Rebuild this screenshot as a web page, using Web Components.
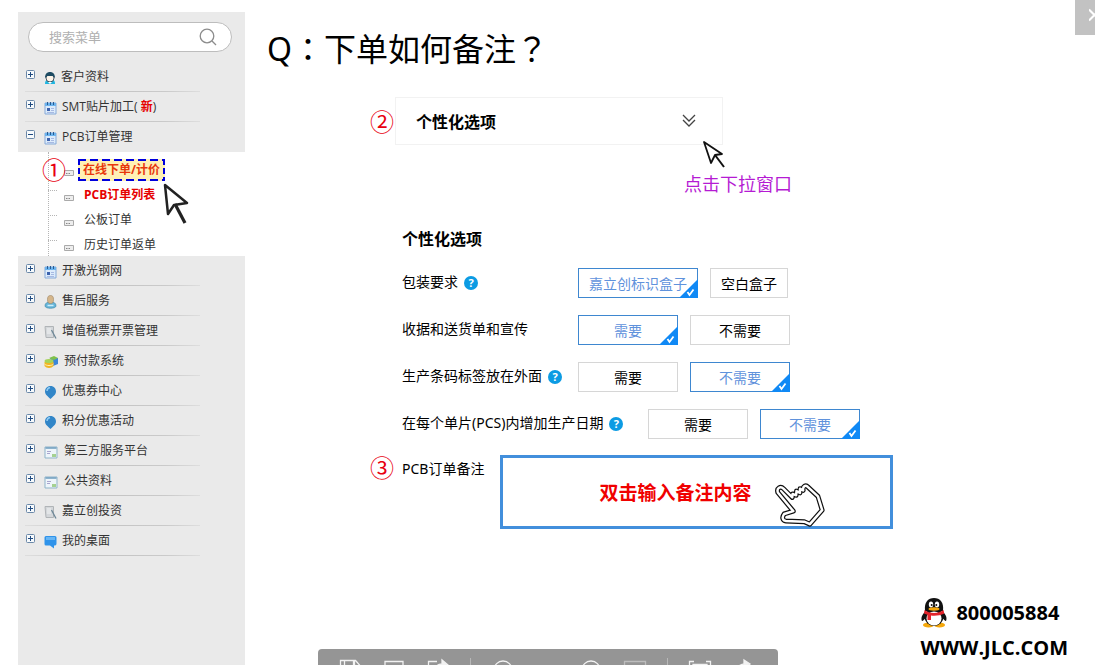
<!DOCTYPE html>
<html lang="zh-CN">
<head>
<meta charset="utf-8">
<meta name="viewport" content="width=device-width, initial-scale=1">
<title>下单如何备注</title>
<style>
  body { margin: 0; background: #fff; color: #000; font: 14px/20px "Open Sans", "Noto Sans CJK SC", sans-serif; overflow: hidden; }
</style>
</head>
<body>
<help-page>
  <side-menu slot="side">
    <menu-item icon="user">客户资料</menu-item>
    <menu-item icon="book">SMT贴片加工( <b style="color:#e60000">新</b>)</menu-item>
    <menu-item icon="book" open>PCB订单管理</menu-item>
    <sub-menu>
      <sub-item mark>在线下单/计价</sub-item>
      <sub-item hot>PCB订单列表</sub-item>
      <sub-item>公板订单</sub-item>
      <sub-item>历史订单返单</sub-item>
    </sub-menu>
    <menu-item icon="book">开激光钢网</menu-item>
    <menu-item icon="agent">售后服务</menu-item>
    <menu-item icon="paper">增值税票开票管理</menu-item>
    <menu-item icon="coins">预付款系统</menu-item>
    <menu-item icon="balloon">优惠券中心</menu-item>
    <menu-item icon="balloon">积分优惠活动</menu-item>
    <menu-item icon="panel">第三方服务平台</menu-item>
    <menu-item icon="panel">公共资料</menu-item>
    <menu-item icon="paper">嘉立创投资</menu-item>
    <menu-item icon="chat">我的桌面</menu-item>
  </side-menu>
  <drop-panel></drop-panel>
  <option-form>
    <choice-row label="包装要求" help options="嘉立创标识盒子,空白盒子" fit checked="0"></choice-row>
    <choice-row label="收据和送货单和宣传" options="需要,不需要" checked="0"></choice-row>
    <choice-row label="生产条码标签放在外面" help options="需要,不需要" checked="1"></choice-row>
    <choice-row label="在每个单片(PCS)内增加生产日期" help wide options="需要,不需要" checked="1"></choice-row>
  </option-form>
  <remark-field></remark-field>
  <contact-info slot="contact"></contact-info>
</help-page>
<viewer-toolbar></viewer-toolbar>
<viewer-close></viewer-close>

<script>
const define = (name, render) => customElements.define(name, class extends HTMLElement {
  connectedCallback() {
    if (this.shadowRoot) return;
    this.attachShadow({ mode: 'open' }).innerHTML = render(this);
  }
});

const ICONS = {
  user: [12, 14, `<path d="M1 13c0-3 1-4 2-4h6c1 0 2 1 2 4z" fill="#21b5e0"/><circle cx="6" cy="7" r="4" fill="#fdf3e7" stroke="#234" stroke-width=".8"/><path d="M1 7c0-4 2-6 5-6s5 2 5 6L8.500 5h-5z" fill="#1f4c63"/><path d="M4 11h4l-2 2z" fill="#fff"/>`],
  book: [13, 14, `<path d="M1 2h11v11H1z" fill="#dcebfb" stroke="#86a9d8"/><path d="M1 2h11v3H1z" fill="#6cb4ee"/><path d="M3.500 1v3M6.500 1v3M9.500 1v3" stroke="#2b5c92"/><path d="M3 7h3v3H3z" fill="#3c62ad"/><path d="M7 7.500h3M7 9.500h3M3 11.500h7" stroke="#a7b9e2"/>`],
  agent: [13, 14, `<path d="M1 11c0-3 2-4 5.500-4S12 8 12 11c0 3-11 3-11 0z" fill="#65b4d8" stroke="#4b8fae" stroke-width=".7"/><path d="M3.500 4.500c0-3 1-4 3-4s3 1 3 4-1 4-3 4-3-1-3-4z" fill="#d5b68b" stroke="#9b835f" stroke-width=".6"/><path d="M3.500 10.500h6" stroke="#c9eefb" stroke-width="1.500"/>`],
  paper: [13, 14, `<path d="M1 1.500h8.500v11H2z" fill="#d4d7da" stroke="#b0b4b7"/><path d="M3 4h4M3 6h4M3 8h4" stroke="#f2f4f5"/><path d="M7.500 5l4.500 8.500" stroke="#6d8797" stroke-width="1.300"/>`],
  coins: [15, 14, `<path d="M6 3h8v6l-5 2z" fill="#3c86d8"/><path d="M5 3l5-2 4 2-4 2z" fill="#7fc14a"/><path d="M.5 7v4c2 2.500 7 2.500 9 0V7z" fill="#f0b522"/><path d="M.5 9c2 2 7 2 9 0" stroke="#fff0b0" fill="none"/><ellipse cx="5" cy="6" rx="4.500" ry="2" fill="#a5d35a"/>`],
  balloon: [13, 14, `<path d="M6.500 1C3 1 1 3.500 1 6.500S3.500 11 6.500 14C9.500 11 12 9.500 12 6.500S10 1 6.500 1z" fill="#3286c8"/><path d="M3 6c0-2 1-3 3-3.500" stroke="#8fcaf3" stroke-width="1.500" fill="none"/>`],
  panel: [15, 14, `<path d="M1 2h12v11H1z" fill="#eef5fa" stroke="#8fb3c9"/><path d="M1.500 3h11" stroke="#6d9dbe" stroke-width="1.500"/><path d="M3 6.500h4M3 8.500h3" stroke="#a9a5cf"/><path d="M8 9h4v3H8z" fill="#a4d192"/>`],
  chat: [13, 14, `<path d="M2 1h9q1.500 0 1.500 1.500v6Q12.500 10.500 11 10.500h-1v3l-4-3H2Q.5 10.500 .5 9V2.500Q.5 1 2 1z" fill="#2f93ea"/><path d="M2 2h9v3H2z" fill="#67b6f5"/>`]
};
const icon = n => { const [w, h, d] = ICONS[n]; return `<svg class="icon" aria-hidden="true" width="${w}" height="${h}" viewBox="0 0 ${w} ${h}">${d}</svg>`; };

define('help-page', () => `
<style>
  :host { display: grid; grid-template-columns: 227px 1fr; box-sizing: border-box; min-height: 100vh; padding: 12px 0 0 18px; }
  main { display: flex; flex-direction: column; padding-top: 15px; }
  h1 { margin: 0 0 26px; padding-left: 22px; font: 32px/44px "Noto Sans", "Noto Sans CJK SC", sans-serif; }
  .mid { font-family: "Noto Sans CJK TC", sans-serif; line-height: 24px; }
  .body { padding-left: 125px; }
  .contact { margin-top: auto; align-self: flex-end; padding-right: 27px; }
</style>
<slot name="side"></slot>
<main><h1>Q<span class="mid" lang="zh-TW">：</span>下单如何备注<span class="mid" lang="zh-TW">？</span></h1>
<div class="body"><slot></slot></div><div class="contact"><slot name="contact"></slot></div></main>`);

define('step-badge', () => `
<style>:host { display: inline-block; width: 24px; color: #e8000f; font: 24px/24px "Noto Sans CJK SC", sans-serif; }</style><slot></slot>`);

define('side-menu', () => `
<style>
  :host { display: block; background: #eaeaea; }
  .search { display: flex; align-items: center; box-sizing: border-box; height: 30px; margin: 10px 13px 10px 10px; padding: 0 14px 0 20px; border: 1px solid #bdbdbd; border-radius: 15px; background: #fff; }
  input { flex: 1; min-width: 0; border: 0; padding: 0; outline: 0; background: none; font: 13px/20px "Noto Sans CJK SC", sans-serif; color: #333; }
  input::placeholder { color: #b0b0b0; opacity: 1; }
  svg { display: block; }
  button { border: 0; padding: 0; background: none; }
</style>
<form class="search" role="search"><input type="text" aria-label="搜索菜单" placeholder="搜索菜单"><button type="button" aria-label="搜索"><svg width="18" height="18" viewBox="0 0 18 18" fill="none" stroke="#8c8c8c" stroke-width="1.300"><circle cx="8" cy="8" r="6.800"/><path d="M13 13l4 4"/></svg></button></form>
<nav><slot></slot></nav>`);

define('menu-item', el => `
<style>
  :host { display: block; height: 30px; }
  a { display: flex; align-items: center; box-sizing: border-box; height: 30px; width: 175px; margin-left: 7px; padding: 1px 0 0 1px; color: #333; text-decoration: none; font: 12px/20px "Open Sans", "Noto Sans CJK SC", sans-serif; white-space: pre; border-bottom: 1px solid; border-image: linear-gradient(90deg, #dedede, #c2c2c2 40%, #cacaca 80%, #dedede) 1; }
  :host([open]) a { border-color: transparent; border-image: none; }
  .fold { margin: 0 9px 5px 0; }
  .icon { margin: 2px 5px 0 0; flex: none; }
</style>
<a href="#"><svg class="fold" aria-hidden="true" width="9" height="9" viewBox="0 0 9 9" fill="none"><rect x=".5" y=".5" width="8" height="8" rx="1" fill="#f7fafc" stroke="#6b88a8"/><path d="M2 4.500h5${el.hasAttribute('open') ? '' : 'M4.500 2v5'}" stroke="#1f4a80"/></svg>${icon(el.getAttribute('icon'))}<span><slot></slot></span></a>`);

define('sub-menu', () => `
<style>
  :host { display: block; position: relative; background: #fff; }
  .line { position: absolute; left: 30px; top: 0; bottom: 0; border-left: 1px dotted #b5b5b5; }
  step-badge { position: absolute; left: 24px; top: 5px; }
  .cursor { position: absolute; left: 145px; top: 31px; }
</style>
<div class="line"></div><slot></slot><step-badge>①</step-badge>
<svg class="cursor" aria-hidden="true" width="26" height="42" viewBox="0 0 26 42" fill="#fff" stroke="#222" stroke-width="2.500" stroke-linejoin="round"><path d="M2 2L5 31L11 22L24 20Z"/><path d="M12 21L22 40" stroke-width="3.200"/></svg>`);

define('sub-item', () => `
<style>
  :host { display: flex; align-items: center; box-sizing: border-box; height: 25px; padding: 2px 0 0 30px; font: 12px/18px "Open Sans", "Noto Sans CJK SC", sans-serif; }
  :host([mark]) { height: 29px; padding-top: 7px; }
  .dots { width: 9px; margin-bottom: 8px; border-top: 1px dotted #b5b5b5; }
  svg { margin: 6px 5px 0 7px; }
  a { box-sizing: border-box; padding: 0 5px; color: #333; text-decoration: none; }
  :host([hot]) a { color: #e60000; font-weight: bold; }
  :host([mark]) a { height: 22px; margin-left: -1px; padding: 0 5px; color: #e8380d; font-weight: bold; line-height: 22px; background: repeating-linear-gradient(90deg, #00d 0 8px, transparent 8px 12px) top/100% 2px no-repeat, repeating-linear-gradient(90deg, #00d 0 8px, transparent 8px 12px) bottom/100% 2px no-repeat, repeating-linear-gradient(#00d 0 6px, transparent 6px 9px) left/2px 100% no-repeat, repeating-linear-gradient(#00d 0 6px, transparent 6px 9px) right/2px 100% no-repeat, #fff1b5; }
  :host([mark]) .dots { visibility: hidden; }
</style>
<span class="dots"></span><svg aria-hidden="true" width="10" height="6" viewBox="0 0 10 6"><path d="M.5 .5h9v5h-9z" fill="#eee" stroke="#aaa"/><path d="M2 3.500h4" stroke="#888" stroke-dasharray="1 .5"/></svg><a href="#"><slot></slot></a>`);

define('drop-panel', () => `
<style>
  :host { display: block; position: relative; width: 422px; }
  .row { display: flex; align-items: center; }
  button { display: flex; flex: none; align-items: center; justify-content: space-between; box-sizing: border-box; width: 328px; height: 48px; margin-left: 1px; padding: 0 26px 0 20px; border: 1px solid #f2f2f2; background: #fff; color: #000; font: bold 16px/24px "Noto Sans CJK SC", sans-serif; }
  p { margin: 26px 0 32px; text-align: right; color: #b51bd3; font: 18px/24px "Noto Sans CJK SC", sans-serif; }
  .cursor { position: absolute; left: 332px; top: 43px; }
</style>
<div class="row"><step-badge>②</step-badge><button type="button">个性化选项<svg aria-hidden="true" width="14" height="14" viewBox="0 0 14 14" fill="none" stroke="#444" stroke-width="1.300"><path d="M1 1l6 6 6-6M1 6l6 6 6-6"/></svg></button></div>
<p>点击下拉窗口</p>
<svg class="cursor" aria-hidden="true" width="24" height="28" viewBox="0 0 24 28" fill="#fff" stroke="#111" stroke-width="1.800" stroke-linejoin="round"><path d="M2 2L9 23L13 15L20 14Z"/><path d="M13 15L22 27" stroke-width="2"/></svg>`);

define('option-form', () => `
<style>
  :host { display: block; padding-left: 32px; }
  h2 { margin: 0 0 18px; font: bold 16px/22px "Noto Sans CJK SC", sans-serif; padding-bottom: 1px; }
  .rows { display: flex; flex-direction: column; gap: 17px; }
</style>
<h2>个性化选项</h2><div class="rows"><slot></slot></div>`);

define('choice-row', el => {
  const checked = +el.getAttribute('checked');
  const opts = el.getAttribute('options').split(',');
  return `
<style>
  :host { display: block; }
  fieldset { display: flex; align-items: center; gap: 12px; height: 30px; margin: 0; padding: 0; border: 0; }
  .name { display: flex; align-items: center; flex: none; width: 164px; white-space: nowrap; padding-bottom: 2px; font: 14px/20px "Noto Sans", "Noto Sans CJK SC", sans-serif; }
  :host([wide]) .name { width: 234px; }
  .help { flex: none; margin: 2px 0 0 6px; width: 14px; height: 14px; border: 0; padding: 0; border-radius: 50%; background: #0c9be3; color: #fff; font: bold 11px/14px "Noto Sans", sans-serif; }
  label { position: relative; flex: none; box-sizing: border-box; width: 100px; height: 30px; border: 1px solid #d6d6d6; text-align: center; font: 14px/28px "Noto Sans CJK SC", sans-serif; }
  :host([fit]) label { width: auto; padding: 0 10px; }
  input { position: absolute; inset: 0; margin: 0; appearance: none; }
  svg { position: absolute; right: -1px; bottom: -1px; display: none; }
  label:has(:checked) { border-color: #3e87d0; color: #5f92dc; }
  :checked ~ svg { display: block; }
</style>
<fieldset aria-label="${el.getAttribute('label')}"><span class="name">${el.getAttribute('label')}${el.hasAttribute('help') ? '<button type="button" class="help">?</button>' : ''}</span>${opts.map((o, i) => `<label><input type="radio" name="choice"${i === checked ? ' checked' : ''}>${o}<svg aria-hidden="true" width="19" height="19" viewBox="0 0 19 19"><path d="M19 0v19H0z" fill="#1089f5"/><path d="M8.500 13l2 3 4-5.500" fill="none" stroke="#fff" stroke-width="1.800"/></svg></label>`).join('')}</fieldset>`;
});

const HAND = 'M8 27C4 14 16 8 24 16L49 41L50 31L60 35L61 23L71 28L71 16L80 21C78 8 88 5 93 11L122 38L134 77L99 117L83 110L31 108C21 107 19 97 26 88L52 80Z';
define('remark-field', () => `
<style>
  :host { display: flex; align-items: flex-start; margin-top: 16px; }
  label { flex: none; width: 98px; margin: 4px 0 0 8px; font: 14px/20px "Noto Sans", "Noto Sans CJK SC", sans-serif; }
  .box { position: relative; flex: 1; max-width: 393px; }
  input { display: block; box-sizing: border-box; width: 100%; height: 74px; padding: 0 42px 2px 0; border: 3px solid #428fdc; outline: 0; text-align: center; color: #f00000; font: bold 19px/28px "Noto Sans CJK SC", sans-serif; }
  input::placeholder { color: #f00000; opacity: 1; }
  svg { position: absolute; right: 68px; top: 28px; }
</style>
<step-badge>③</step-badge><label for="remark">PCB订单备注</label>
<div class="box"><input id="remark" type="text" placeholder="双击输入备注内容">
<svg aria-hidden="true" width="50" height="44" viewBox="0 0 142 125" fill="none" stroke-linejoin="round"><path d="${HAND}" fill="#fff" stroke="#111" stroke-width="14"/><path d="${HAND}" stroke="#fff" stroke-width="7"/></svg></div>`);

define('contact-info', () => `
<style>
  :host { display: block; font: bold 20px/35px "Open Sans", sans-serif; }
  div { display: flex; align-items: center; gap: 9px; padding-left: 1px; }
  a { color: #000; text-decoration: none; }
</style>
<div><svg aria-hidden="true" width="26" height="30" viewBox="0 0 26 30"><ellipse cx="7.500" cy="27" rx="5.500" ry="2.500" fill="#f5a80c"/><ellipse cx="18.500" cy="27" rx="5.500" ry="2.500" fill="#f5a80c"/><path d="M5 13C0 17 0 21 1 23c1 0 3-2 4-4zM21 13c5 4 5 8 4 10-1 0-3-2-4-4z" fill="#111"/><ellipse cx="13" cy="19" rx="9.500" ry="9" fill="#111"/><path d="M4 13C3 4 7 0 13 0s10 4 9 13z" fill="#111"/><ellipse cx="13" cy="20.500" rx="7.500" ry="7" fill="#fff"/><ellipse cx="10" cy="6.500" rx="2.200" ry="3" fill="#fff"/><ellipse cx="16" cy="6.500" rx="2.200" ry="3" fill="#fff"/><circle cx="10.700" cy="7" r="1" fill="#111"/><circle cx="15.300" cy="7" r="1" fill="#111"/><ellipse cx="13" cy="11" rx="5.500" ry="1.700" fill="#f5a80c"/><path d="M3.500 12c5 4 14 4 19 0l.8 3.500c-4 2-9 2.500-13.300 2V22H6.500v-5.200L3 15.500z" fill="#e3242b"/></svg><span>800005884</span></div>
<a href="#">WWW.JLC.COM</a>`);

define('viewer-toolbar', () => {
  const b = (name, d, dim) => `<button type="button" aria-label="${name}"><svg width="24" height="24" viewBox="0 0 24 24" fill="none" stroke="${dim ? '#bdbdbd' : '#f2f2f2'}" stroke-width="1.300">${d}</svg></button>`;
  return `
<style>
  :host { position: fixed; left: 50%; bottom: 0; display: block; width: 460px; height: 16px; margin-left: -230px; overflow: hidden; border-radius: 4px 4px 0 0; background: #959595; }
  .bar { display: flex; align-items: flex-start; gap: 20px; padding: 9px 20px 0; }
  button { flex: none; height: 24px; padding: 0; border: 0; background: none; }
  svg { display: block; }
  i { flex: none; width: 1px; height: 24px; background: #b8b8b8; }
  .zoom { flex: none; width: 24px; }
</style>
<div class="bar">${b('保存', '<path d="M2.500 22V2.500h15l4 4.500V22zM6.500 3v7h10V3M15.500 3v7"/>')}${b('打印', '<path d="M3 3.500h18V19H3z"/>')}${b('分享', '<path d="M11 3.500H2.500V20h17v-7"/><path d="M9 13c0-5 3-7 7-7V2l6 5-6 6v-3c-3 0-5 1-7 3z" fill="#f2f2f2"/>')}<i></i>${b('放大', '<circle cx="12" cy="12" r="9"/>')}<span class="zoom"></span>${b('缩小', '<circle cx="12" cy="12" r="9"/>')}${b('原始尺寸', '<path d="M1.500 3.500h21V19h-21z"/>', 1)}<i></i>${b('全屏', '<path d="M1.500 9V3.500H6M18 3.500h4.500V9M5 6.500h14V16H5z"/>')}${b('旋转', '<path d="M4 15c0-6 4-9 9-9"/><path d="M12 2l6 4-6 4z" fill="#f2f2f2"/>')}</div>`;
});

define('viewer-close', () => `
<style>
  :host { position: fixed; top: 0; right: 0; display: block; }
  button { display: flex; align-items: flex-start; justify-content: flex-end; width: 20px; height: 35px; padding: 8px 0 0; border: 0; background: #c2c2c2; }
</style>
<button type="button" aria-label="关闭"><svg width="6" height="14" viewBox="0 0 6 14" fill="none" stroke="#fff" stroke-width="2"><path d="M0 1.500l11 11M0 12.500l11-11"/></svg></button>`);
</script>
</body>
</html>
